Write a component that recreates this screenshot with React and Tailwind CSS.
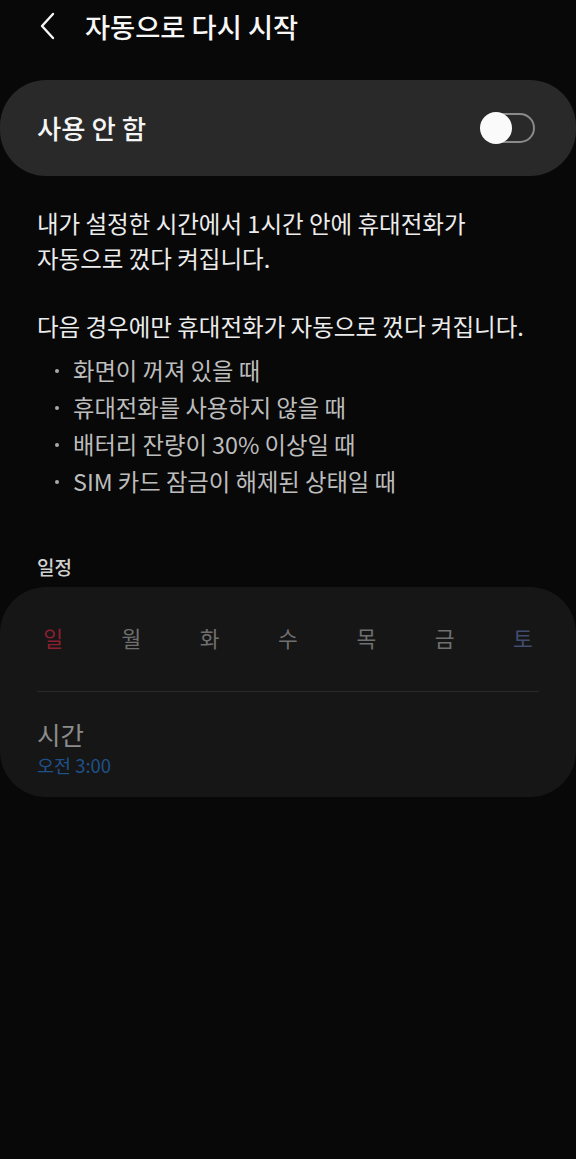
export default function App() {
  const days = [
    { label: '일', cls: 'text-[#8c1f30]' },
    { label: '월', cls: 'text-[#6f6f6f]' },
    { label: '화', cls: 'text-[#6f6f6f]' },
    { label: '수', cls: 'text-[#6f6f6f]' },
    { label: '목', cls: 'text-[#6f6f6f]' },
    { label: '금', cls: 'text-[#6f6f6f]' },
    { label: '토', cls: 'text-[#414d70]' },
  ]

  const conditions = [
    '화면이 꺼져 있을 때',
    '휴대전화를 사용하지 않을 때',
    '배터리 잔량이 30% 이상일 때',
    'SIM 카드 잠금이 해제된 상태일 때',
  ]

  return (
    <div className="min-h-[1159px] bg-[#080808] font-['Noto_Sans_CJK_KR','Noto_Sans',sans-serif]">
      {/* header */}
      <div className="flex h-[52px] items-center pl-[38px]">
        <svg width="20" height="28" viewBox="0 0 20 28" fill="none" className="shrink-0">
          <path d="M15 2 L4 14 L15 26" stroke="#f5f5f5" strokeWidth="2.4" strokeLinecap="round" strokeLinejoin="round" />
        </svg>
        <h1 className="ml-[27px] text-[27.3px] leading-[34px] font-medium text-[#f7f7f7]">자동으로 다시 시작</h1>
      </div>

      {/* master switch */}
      <div className="mt-[28px] flex h-[96px] items-center justify-between rounded-[46px] bg-[#292929] pl-[37px] pr-[41px]">
        <span className="text-[26.4px] leading-[34px] font-medium text-[#f5f5f5]">사용 안 함</span>
        <div className="relative h-[30px] w-[55px]">
          <div className="absolute right-0 top-0 h-[30px] w-[53px] rounded-full border-2 border-[#8a8a8a]" />
          <div className="absolute left-0 top-[-1px] h-[32px] w-[32px] rounded-full bg-[#fafafa]" />
        </div>
      </div>

      {/* description */}
      <div className="mt-[30px] px-[37px] text-[23.5px] leading-[35px] text-[#ececec]">
        <p>
          내가 설정한 시간에서 1시간 안에 휴대전화가
          <br />
          자동으로 껐다 켜집니다.
        </p>
        <p className="mt-[33px]">다음 경우에만 휴대전화가 자동으로 껐다 켜집니다.</p>
      </div>

      <ul className="mt-[8px] pl-[55px]">
        {conditions.map((c) => (
          <li key={c} className="flex items-center text-[23.3px] leading-[37px] text-[#bdbdbd]">
            <span className="mr-[14px] h-[4px] w-[4px] shrink-0 rounded-full bg-[#a8a8a8]" />
            {c}
          </li>
        ))}
      </ul>

      {/* schedule */}
      <div className="mt-[55px] px-[37px] text-[19px] leading-[24px] font-medium text-[#d0d0d0]">일정</div>

      <div className="mt-[8px] rounded-[46px] bg-[#161616] pb-[21px] pt-[31px]">
        <div className="grid grid-cols-7 px-[14px]">
          {days.map((d) => (
            <div key={d.label} className={`flex h-[40px] items-center justify-center text-[21.5px] ${d.cls}`}>
              {d.label}
            </div>
          ))}
        </div>
        <div className="mx-[37px] mt-[33px] h-px bg-[#2a2a2a]" />
        <div className="mt-[26px] px-[37px]">
          <div className="text-[25.5px] leading-[32px] text-[#8c8c8c]">시간</div>
          <div className="mt-[4px] text-[18.5px] leading-[22px] text-[#1f5189]">오전 3:00</div>
        </div>
      </div>
    </div>
  )
}
